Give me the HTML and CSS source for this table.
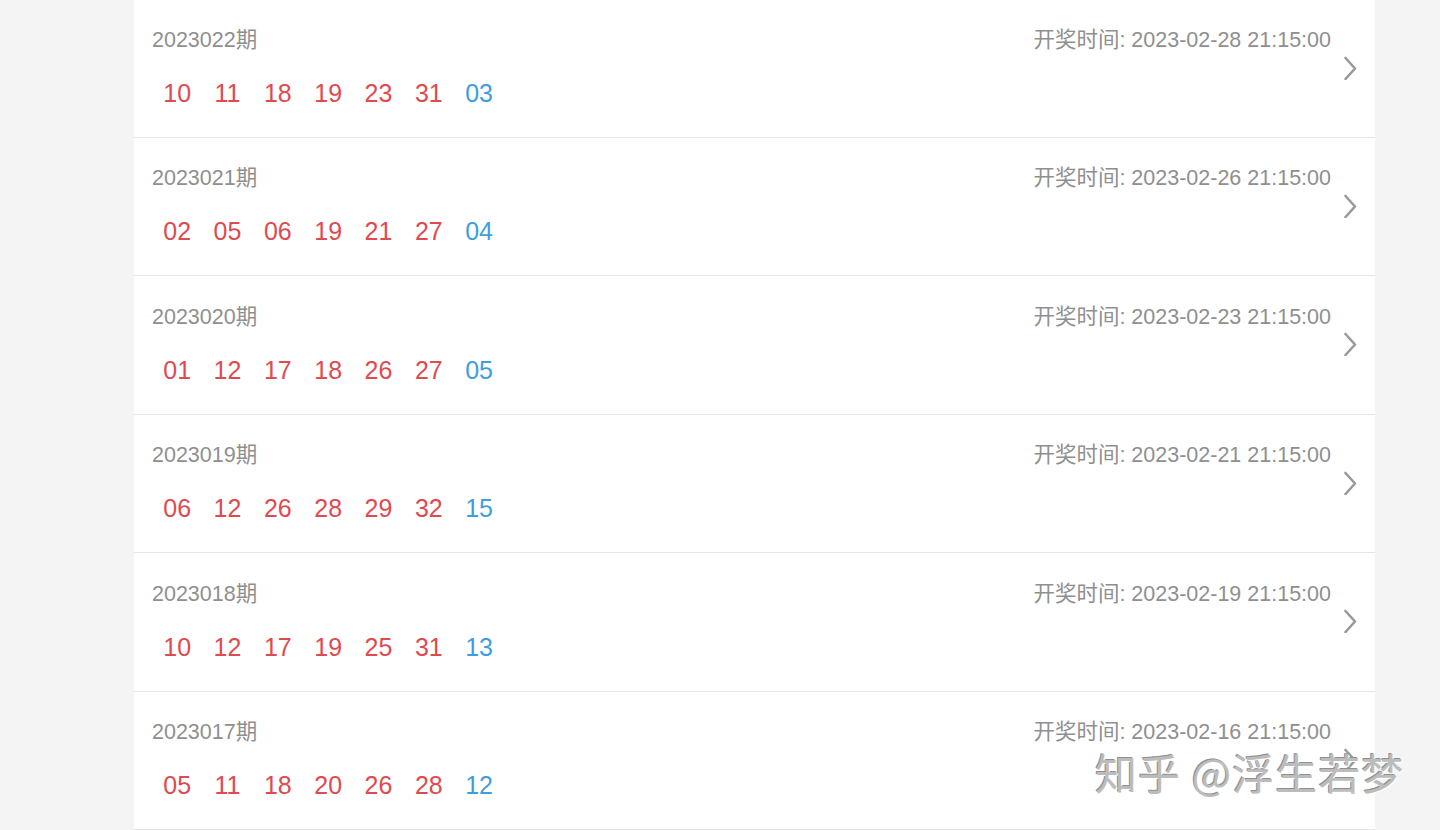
FILE: index.html
```html
<!DOCTYPE html>
<html lang="zh">
<head>
<meta charset="utf-8">
<title>开奖记录</title>
<link rel="stylesheet" href="styles.css">
</head>
<body>
<div class="page">
  <ul class="list">
    <li class="row">
      <div class="main">
        <div class="head"><span class="issue">2023022期</span><span class="time">开奖时间: 2023-02-28 21:15:00</span></div>
        <div class="balls"><span class="ball red">10</span><span class="ball red">11</span><span class="ball red">18</span><span class="ball red">19</span><span class="ball red">23</span><span class="ball red">31</span><span class="ball blue">03</span></div>
      </div>
      <svg class="chev" viewBox="0 0 14 24" width="14" height="24"><path d="M2.5 2 L12 12.5 L2.5 23" fill="none" stroke="#999999" stroke-width="2.6" stroke-linecap="round" stroke-linejoin="round"/></svg>
    </li>
    <li class="row">
      <div class="main">
        <div class="head"><span class="issue">2023021期</span><span class="time">开奖时间: 2023-02-26 21:15:00</span></div>
        <div class="balls"><span class="ball red">02</span><span class="ball red">05</span><span class="ball red">06</span><span class="ball red">19</span><span class="ball red">21</span><span class="ball red">27</span><span class="ball blue">04</span></div>
      </div>
      <svg class="chev" viewBox="0 0 14 24" width="14" height="24"><path d="M2.5 2 L12 12.5 L2.5 23" fill="none" stroke="#999999" stroke-width="2.6" stroke-linecap="round" stroke-linejoin="round"/></svg>
    </li>
    <li class="row">
      <div class="main">
        <div class="head"><span class="issue">2023020期</span><span class="time">开奖时间: 2023-02-23 21:15:00</span></div>
        <div class="balls"><span class="ball red">01</span><span class="ball red">12</span><span class="ball red">17</span><span class="ball red">18</span><span class="ball red">26</span><span class="ball red">27</span><span class="ball blue">05</span></div>
      </div>
      <svg class="chev" viewBox="0 0 14 24" width="14" height="24"><path d="M2.5 2 L12 12.5 L2.5 23" fill="none" stroke="#999999" stroke-width="2.6" stroke-linecap="round" stroke-linejoin="round"/></svg>
    </li>
    <li class="row">
      <div class="main">
        <div class="head"><span class="issue">2023019期</span><span class="time">开奖时间: 2023-02-21 21:15:00</span></div>
        <div class="balls"><span class="ball red">06</span><span class="ball red">12</span><span class="ball red">26</span><span class="ball red">28</span><span class="ball red">29</span><span class="ball red">32</span><span class="ball blue">15</span></div>
      </div>
      <svg class="chev" viewBox="0 0 14 24" width="14" height="24"><path d="M2.5 2 L12 12.5 L2.5 23" fill="none" stroke="#999999" stroke-width="2.6" stroke-linecap="round" stroke-linejoin="round"/></svg>
    </li>
    <li class="row">
      <div class="main">
        <div class="head"><span class="issue">2023018期</span><span class="time">开奖时间: 2023-02-19 21:15:00</span></div>
        <div class="balls"><span class="ball red">10</span><span class="ball red">12</span><span class="ball red">17</span><span class="ball red">19</span><span class="ball red">25</span><span class="ball red">31</span><span class="ball blue">13</span></div>
      </div>
      <svg class="chev" viewBox="0 0 14 24" width="14" height="24"><path d="M2.5 2 L12 12.5 L2.5 23" fill="none" stroke="#999999" stroke-width="2.6" stroke-linecap="round" stroke-linejoin="round"/></svg>
    </li>
    <li class="row">
      <div class="main">
        <div class="head"><span class="issue">2023017期</span><span class="time">开奖时间: 2023-02-16 21:15:00</span></div>
        <div class="balls"><span class="ball red">05</span><span class="ball red">11</span><span class="ball red">18</span><span class="ball red">20</span><span class="ball red">26</span><span class="ball red">28</span><span class="ball blue">12</span></div>
      </div>
      <svg class="chev" viewBox="0 0 14 24" width="14" height="24"><path d="M2.5 2 L12 12.5 L2.5 23" fill="none" stroke="#999999" stroke-width="2.6" stroke-linecap="round" stroke-linejoin="round"/></svg>
    </li>
  </ul>
</div>
<div class="watermark">知乎 @浮生若梦</div>
</body>
</html>
```

FILE: styles.css
```css
html, body {
  margin: 0;
  padding: 0;
  height: 100%;
  overflow: hidden;
  background: #f4f4f4;
  font-family: "Liberation Sans", Arial, "Noto Sans CJK SC", sans-serif;
}

.page {
  margin-left: 134px;
  width: 1241px;
  background: #ffffff;
}

.list {
  list-style: none;
  margin: -0.4px 0 0 0;
  padding: 0;
}

.row {
  display: flex;
  align-items: flex-start;
  height: 138.4px;
  box-sizing: border-box;
  padding: 0 18px;
  border-bottom: 1px solid #e6e6e6;
}

.main {
  flex: 1;
  display: flex;
  flex-direction: column;
  gap: 23px;
  padding-top: 25.4px;
  margin-right: 2px;
}

.head {
  display: flex;
  justify-content: space-between;
  align-items: center;
  height: 30px;
  font-size: 21.5px;
  color: #8f8f8f;
  line-height: 30px;
}

.balls {
  display: flex;
  height: 30px;
  line-height: 30px;
  font-size: 25px;
}

.ball {
  width: 50.33px;
  text-align: center;
}

.red { color: #df4a4f; }
.blue { color: #3f9ddf; }

.chev {
  flex: none;
  margin-top: 56px;
  margin-left: 10px;
}

.watermark {
  position: absolute;
  left: 1095px;
  top: 750px;
  font-size: 42px;
  line-height: 44px;
  color: #bcbcbc;
  letter-spacing: 1px;
  text-shadow: 1px 1px 0 #ffffff, -1px -1px 0 #909090;
  font-family: "Noto Sans CJK SC", "Liberation Sans", sans-serif;
  white-space: nowrap;
}
```
